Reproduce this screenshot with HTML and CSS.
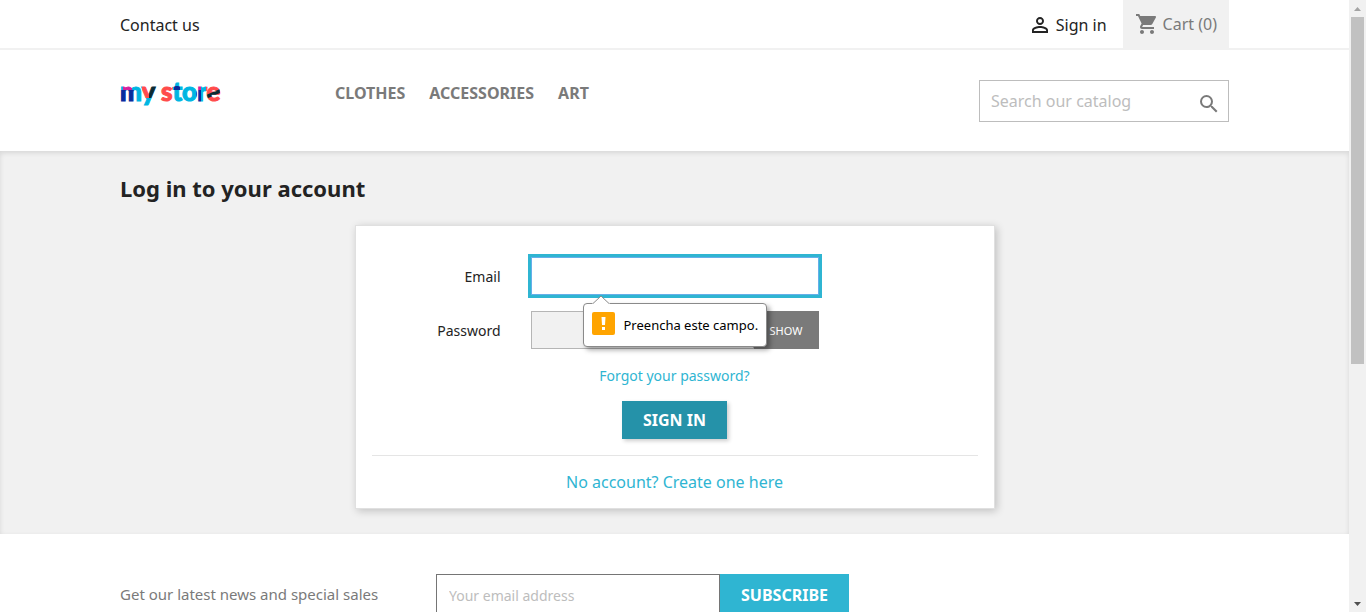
FILE: index.html
```html
<!DOCTYPE html>
<html lang="en">
<head>
<meta charset="utf-8">
<meta name="viewport" content="width=device-width, initial-scale=1">
<title>Log in to your account</title>
<link rel="stylesheet" href="styles.css">
</head>
<body>
<div class="viewport">
  <div class="page">
    <header>
      <nav class="topbar">
        <div class="container topbar-inner">
          <a class="contact" href="#">Contact us</a>
          <div class="user-links">
            <a class="signin" href="#">
              <svg class="icon" viewBox="0 0 24 24" aria-hidden="true"><path d="M12 5.9a2.1 2.1 0 1 1 0 4.2 2.1 2.1 0 0 1 0-4.2m0 9c2.970 0 6.100 1.460 6.100 2.100v1.100H5.900V17c0-.640 3.130-2.100 6.100-2.100M12 4C9.790 4 8 5.790 8 8s1.790 4 4 4 4-1.790 4-4-1.790-4-4-4zm0 9c-2.670 0-8 1.340-8 4v3h16v-3c0-2.660-5.330-4-8-4z"/></svg>
              <span>Sign in</span>
            </a>
            <a class="cart" href="#">
              <svg class="icon" viewBox="0 0 24 24" aria-hidden="true"><path d="M7 18c-1.100 0-1.990.9-1.990 2S5.900 22 7 22s2-.9 2-2-.9-2-2-2zM1 2v2h2l3.600 7.590-1.350 2.450c-.16.280-.25.610-.25.960 0 1.100.9 2 2 2h12v-2H7.420c-.14 0-.25-.11-.25-.25l.03-.12.9-1.630h7.450c.750 0 1.410-.41 1.750-1.030l3.580-6.490c.08-.14.12-.31.12-.48 0-.55-.45-1-1-1H5.210l-.94-2H1zm16 16c-1.100 0-1.990.9-1.990 2s.89 2 1.990 2 2-.9 2-2-.9-2-2-2z"/></svg>
              <span>Cart (0)</span>
            </a>
          </div>
        </div>
      </nav>
      <div class="container header-main">
        <a class="logo" href="#">
          <svg width="104" height="42" viewBox="0 0 104 42" role="img" aria-label="my store">
            <defs>
              <pattern id="logo-colors" patternUnits="userSpaceOnUse" width="104" height="42">
                <rect width="104" height="42" fill="#00b5e2"/>
                <rect x="3" y="12" width="9" height="5" fill="#d6219c"/>
                <rect x="0" y="17" width="14" height="12" fill="#0a2a9c"/>
                <rect x="22" y="0" width="7" height="25" fill="#ff4b4b"/>
                <rect x="29" y="0" width="7" height="25" fill="#0b2a33"/>
                <rect x="40" y="0" width="13" height="42" fill="#ff4b4b"/>
                <rect x="54" y="13" width="6" height="4" fill="#0a2a9c"/>
                <rect x="76" y="12" width="5" height="5" fill="#d6219c"/>
                <rect x="76" y="17" width="5" height="12" fill="#0a2a9c"/>
                <rect x="86" y="0" width="18" height="42" fill="#ff4b4b"/>
                <path d="M86 22l14-6v4l-14 6z" fill="#0b2a33"/>
              </pattern>
            </defs>
            <text class="logo-text" x="0" y="28">my store</text>
          </svg>
        </a>
        <nav class="menu">
          <a href="#">CLOTHES</a>
          <a href="#">ACCESSORIES</a>
          <a href="#">ART</a>
        </nav>
        <form class="search">
          <input type="text" aria-label="Search" placeholder="Search our catalog">
          <button type="submit" aria-label="Search">
            <svg class="icon" viewBox="0 0 24 24" aria-hidden="true"><path d="M15.500 14h-.79l-.28-.27A6.471 6.471 0 0 0 16 9.500 6.500 6.500 0 1 0 9.500 16c1.610 0 3.090-.59 4.230-1.570l.27.28v.79l5 4.990L20.490 19l-4.990-5zm-6 0C7.010 14 5 11.990 5 9.500S7.010 5 9.500 5 14 7.010 14 9.500 11.990 14 9.500 14z"/></svg>
          </button>
        </form>
      </div>
    </header>

    <main class="wrapper">
      <div class="container">
        <h1>Log in to your account</h1>
        <section class="card">
          <form class="login">
            <div class="row">
              <label for="email">Email</label>
              <div class="field">
                <input class="focused" id="email" type="email">
                <div class="bubble" role="alert">
                  <svg class="bubble-arrow" width="18" height="9" viewBox="0 0 18 9" aria-hidden="true"><path d="M0 9L9 1l9 8z" fill="#fff"/><path d="M1 8.500L9 1l8 7.500" fill="none" stroke="#8a8a8a"/></svg>
                  <svg class="bubble-icon" width="23" height="23" viewBox="0 0 23 23" aria-hidden="true"><rect width="23" height="23" rx="2" fill="#ffa400"/><path d="M9.500 5h4l-.5 8h-3zM10 15h3v3h-3z" fill="#fff"/></svg>
                  <span>Preencha este campo.</span>
                </div>
              </div>
            </div>
            <div class="row">
              <label for="password">Password</label>
              <div class="field">
                <input id="password" type="password">
                <button class="show" type="button">SHOW</button>
              </div>
            </div>
            <a class="forgot" href="#">Forgot your password?</a>
            <button class="submit" type="submit">SIGN IN</button>
          </form>
          <hr>
          <a class="register" href="#">No account? Create one here</a>
        </section>
      </div>
    </main>

    <footer class="container newsletter">
      <label for="news-email">Get our latest news and special sales</label>
      <form class="news-form">
        <input id="news-email" type="email" placeholder="Your email address">
        <button type="submit">SUBSCRIBE</button>
      </form>
    </footer>
  </div>

  <div class="scrollbar" aria-hidden="true">
    <svg width="17" height="17" viewBox="0 0 17 17"><path d="M5 11l3.500-4 3.500 4z" fill="#a3a3a3"/></svg>
    <div class="track"><div class="thumb"></div></div>
    <svg width="17" height="17" viewBox="0 0 17 17"><path d="M5 7l3.500 4L12 7z" fill="#505050"/></svg>
  </div>
</div>
</body>
</html>
```

FILE: styles.css
```css
* {
  box-sizing: border-box;
}

body {
  margin: 0;
  background: #fff;
  color: #232323;
  font-family: "Noto Sans", sans-serif;
  font-size: 16px;
  line-height: 20px;
}

a {
  color: inherit;
  text-decoration: none;
}

input,
button {
  margin: 0;
  border: 0;
  border-radius: 0;
  font-family: inherit;
}

input::placeholder {
  color: #bdbdbd;
  opacity: 1;
}

.icon {
  width: 24px;
  height: 24px;
  fill: currentColor;
}

.viewport {
  display: flex;
  height: 100vh;
}

.page {
  flex: 1;
  min-width: 0;
  overflow: hidden;
}

.container {
  max-width: 1109px;
  margin: 0 auto;
}

/* Top bar */
.topbar {
  border-bottom: 2px solid #f1f1f1;
}

.topbar-inner,
.user-links,
.signin,
.cart {
  display: flex;
  align-items: center;
}

.topbar-inner {
  justify-content: space-between;
}

.user-links {
  gap: 16px;
}

.contact,
.signin {
  padding-top: 2px;
}

.signin,
.cart {
  gap: 4px;
}

.cart {
  height: 48px;
  padding: 0 12px;
  background: #f1f1f1;
  color: #7a7a7a;
}

/* Header */
.header-main {
  display: flex;
  align-items: flex-start;
  height: 101px;
  padding-top: 30px;
}

.logo {
  width: 215px;
  margin-top: -7px;
  line-height: 0;
}

.logo-text {
  fill: url(#logo-colors);
  stroke: url(#logo-colors);
  stroke-width: 1px;
  font-family: Lato, sans-serif;
  font-size: 26px;
  font-weight: 900;
}

.menu {
  display: flex;
  gap: 24px;
  padding-top: 3px;
  color: #7a7a7a;
  font-weight: 700;
}

.search {
  display: flex;
  align-items: center;
  width: 250px;
  height: 42px;
  margin-left: auto;
  padding: 0 7px 0 11px;
  border: 1px solid #bdbdbd;
  color: #7a7a7a;
}

.search input {
  flex: 1;
  min-width: 0;
  padding: 0;
  font-size: 16px;
}

.search button {
  padding: 6px 0 0;
  background: none;
  color: inherit;
  line-height: 0;
}

/* Login */
.wrapper {
  padding: 25px 0;
  background: #f1f1f1;
  box-shadow: inset 0 2px 5px 0 rgba(0, 0, 0, 0.11);
}

h1 {
  margin: 0 0 24px;
  font-size: 22px;
  line-height: 25px;
}

.card {
  max-width: 640px;
  margin: 0 auto;
  padding: 31px 16px 16px;
  border: 1px solid #e0e0e0;
  background: #fff;
  box-shadow: 2px 2px 8px 0 rgba(0, 0, 0, 0.2);
}

.login {
  display: flex;
  flex-direction: column;
  align-items: center;
}

.row {
  display: grid;
  grid-template-columns: 1fr 288px 1fr;
  gap: 30px;
  align-items: center;
  width: 100%;
  margin-bottom: 16px;
  font-size: 14px;
}

.row label {
  padding-top: 2px;
  text-align: right;
}

.field {
  display: flex;
  position: relative;
}

.field input {
  flex: 1;
  min-width: 0;
  height: 38px;
  padding: 8px 16px;
  border: 1px solid #b5b5b5;
  background: #f1f1f1;
}

.field .focused {
  border-color: #66afe9;
  outline: 3px solid #2fb5d2;
  background: #fff;
}

.show {
  width: 65px;
  background: #7a7a7a;
  color: #fff;
  font-size: 11px;
}

.bubble {
  display: flex;
  position: absolute;
  z-index: 1;
  top: 46px;
  left: 52px;
  align-items: center;
  gap: 9px;
  height: 44px;
  padding: 0 8px;
  border: 1px solid #8a8a8a;
  border-radius: 4px;
  background: #fff;
  box-shadow: 3px 3px 5px rgba(0, 0, 0, 0.35);
  color: #000;
  font-size: 13px;
  white-space: nowrap;
}

.bubble-arrow {
  position: absolute;
  top: -9px;
  left: 8px;
}

.bubble-icon {
  margin-bottom: 3px;
}

.forgot {
  margin: 1px 0 15px;
  color: #2fb5d2;
  font-size: 14px;
}

.submit,
.news-form button {
  background: #2fb5d2;
  color: #fff;
  font-size: 16px;
  font-weight: 700;
}

.submit {
  height: 38px;
  padding: 0 21px;
  background: #2592a9;
  box-shadow: 2px 2px 4px 0 rgba(0, 0, 0, 0.2);
}

hr {
  margin: 16px 0;
  border: 0;
  border-top: 1px solid #e5e5e5;
}

.register {
  display: block;
  color: #2fb5d2;
  text-align: center;
}

/* Newsletter */
.newsletter {
  display: flex;
  align-items: center;
  padding-top: 40px;
  color: #7a7a7a;
  font-size: 15px;
}

.newsletter label {
  width: 316px;
  padding-bottom: 2px;
}

.news-form {
  display: flex;
  height: 42px;
}

.news-form input {
  width: 284px;
  padding: 0 12px;
  border: 1px solid #757575;
  font-size: 14px;
}

.news-form button {
  width: 129px;
}

/* Scrollbar */
.scrollbar {
  display: flex;
  flex-direction: column;
  width: 17px;
  background: #f1f1f1;
}

.track {
  flex: 1;
  padding: 0 2px;
}

.thumb {
  height: 60%;
  background: #c1c1c1;
}
```
